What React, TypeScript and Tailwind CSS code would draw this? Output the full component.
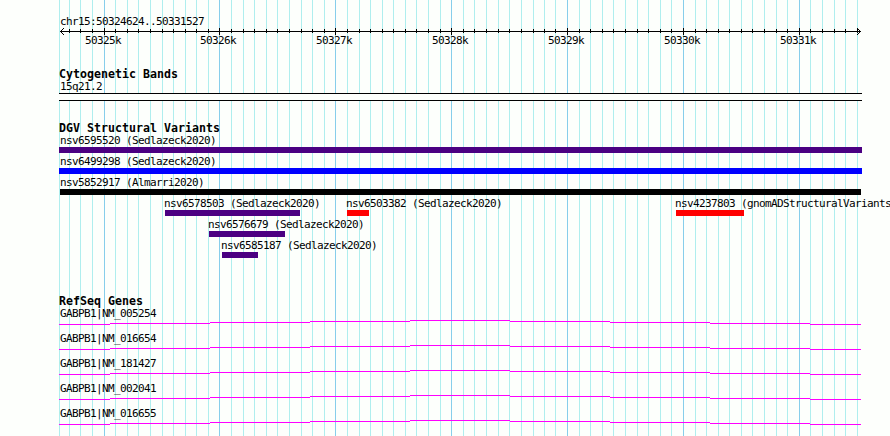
import React from "react";

const majorTicks = [
  { x: 104, label: "50325k" },
  { x: 219, label: "50326k" },
  { x: 335, label: "50327k" },
  { x: 451, label: "50328k" },
  { x: 567, label: "50329k" },
  { x: 683, label: "50330k" },
  { x: 799, label: "50331k" },
];

const minorTicks = [
  69, 80, 92, 115, 127, 138, 150, 162, 173, 185, 196, 208, 231, 243, 254, 266,
  277, 289, 301, 312, 324, 347, 359, 370, 382, 393, 405, 416, 428, 440, 463,
  474, 486, 498, 509, 521, 533, 544, 555, 579, 590, 602, 613, 625, 637, 648,
  660, 671, 695, 706, 718, 729, 741, 752, 764, 776, 787, 810, 822, 834, 845,
  857,
];

type Variant = { name: string; start: number; end: number; color: string };

const variantRows: Variant[][] = [
  [{ name: "nsv6595520 (Sedlazeck2020)", start: 59, end: 862, color: "bg-[#4b0082]" }],
  [{ name: "nsv6499298 (Sedlazeck2020)", start: 59, end: 862, color: "bg-[#0000ff]" }],
  [{ name: "nsv5852917 (Almarri2020)", start: 60, end: 861, color: "bg-black" }],
  [
    { name: "nsv6578503 (Sedlazeck2020)", start: 165, end: 300, color: "bg-[#4b0082]" },
    { name: "nsv6503382 (Sedlazeck2020)", start: 347, end: 369, color: "bg-[#ff0000]" },
    { name: "nsv4237803 (gnomADStructuralVariants", start: 676, end: 744, color: "bg-[#ff0000]" },
  ],
  [{ name: "nsv6576679 (Sedlazeck2020)", start: 209, end: 285, color: "bg-[#4b0082]" }],
  [{ name: "nsv6585187 (Sedlazeck2020)", start: 222, end: 258, color: "bg-[#4b0082]" }],
];

const genes = ["NM_005254", "NM_016654", "NM_181427", "NM_002041", "NM_016655"];

function GridLines() {
  return (
    <svg className="absolute inset-0" width="890" height="436" shapeRendering="crispEdges">
      {[59, ...minorTicks].map((x) => (
        <rect key={x} x={x} y="0" width="1" height="436" fill="#afeeee" />
      ))}
      {majorTicks.map(({ x }) => (
        <rect key={x} x={x} y="0" width="1" height="436" fill="#87ceeb" />
      ))}
    </svg>
  );
}

function Ruler() {
  return (
    <svg className="block" width="890" height="20">
      <g shapeRendering="crispEdges">
        <rect x="60" y="3" width="801" height="1" />
        {minorTicks.map((x) => (
          <rect key={x} x={x} y="1" width="1" height="4" />
        ))}
        {majorTicks.map(({ x }) => (
          <rect key={x} x={x} y="0" width="1" height="7" />
        ))}
        {[1, 2, 3].map((i) => (
          <g key={i}>
            <rect x={60 + i} y={3 - i} width="1" height="1" />
            <rect x={60 + i} y={3 + i} width="1" height="1" />
            <rect x={860 - i} y={3 - i} width="1" height="1" />
            <rect x={860 - i} y={3 + i} width="1" height="1" />
          </g>
        ))}
      </g>
      {majorTicks.map(({ x, label }) => (
        <text key={label} x={x - 19} y="16">
          {label}
        </text>
      ))}
    </svg>
  );
}

function Heading({ children }: { children: React.ReactNode }) {
  return (
    <h2 className="pl-[59px] h-3 text-[11.6px] font-bold leading-[13px] tracking-[0.016px]">
      {children}
    </h2>
  );
}

function VariantRow({ items }: { items: Variant[] }) {
  return (
    <div className="flex h-[21px]">
      {items.map((v, i) => (
        <div
          key={v.name}
          className="shrink-0"
          style={{
            width: v.end - v.start,
            marginLeft: v.start - (i > 0 ? items[i - 1].end : 0),
          }}
        >
          {/* labels start a pixel before the bar, but never left of the panel */}
          <div style={{ marginLeft: Math.max(v.start - 1, 60) - v.start }}>{v.name}</div>
          <div className={`h-1.5 ${v.color}`} />
        </div>
      ))}
    </div>
  );
}

function Gene({ name }: { name: string }) {
  return (
    <div className="h-[25px]">
      <div className="pl-[60px]">GABPB1|{name}</div>
      <svg className="block" width="890" height="5" shapeRendering="crispEdges" fill="#ff00ff">
        <rect x="59" y="4" width="51" height="1" />
        <rect x="110" y="3" width="100" height="1" />
        <rect x="210" y="2" width="100" height="1" />
        <rect x="310" y="1" width="100" height="1" />
        <rect x="410" y="0" width="100" height="1" />
        <rect x="510" y="1" width="100" height="1" />
        <rect x="610" y="2" width="100" height="1" />
        <rect x="710" y="3" width="100" height="1" />
        <rect x="810" y="4" width="51" height="1" />
      </svg>
    </div>
  );
}

export default function App() {
  return (
    <div className="relative w-[890px] h-[436px] overflow-hidden bg-[#fdfffc] text-black font-['DejaVu_Sans_Mono',monospace] text-[11px] leading-[13px] tracking-[-0.622px] whitespace-nowrap">
      <GridLines />
      <main className="relative pt-[15px]">
        <div className="pl-[60px]">chr15:50324624..50331527</div>
        <Ruler />

        <section className="mt-5">
          <Heading>Cytogenetic Bands</Heading>
          <div className="pl-[60px]">15q21.2</div>
          <div className="ml-[59px] w-[803px] h-2 border-y border-black bg-[#fdfffc]" />
        </section>

        <section className="mt-[21px]">
          <Heading>DGV Structural Variants</Heading>
          {variantRows.map((items) => (
            <VariantRow key={items[0].name} items={items} />
          ))}
        </section>

        <section className="mt-[35px]">
          <Heading>RefSeq Genes</Heading>
          {genes.map((name) => (
            <Gene key={name} name={name} />
          ))}
        </section>
      </main>
    </div>
  );
}
